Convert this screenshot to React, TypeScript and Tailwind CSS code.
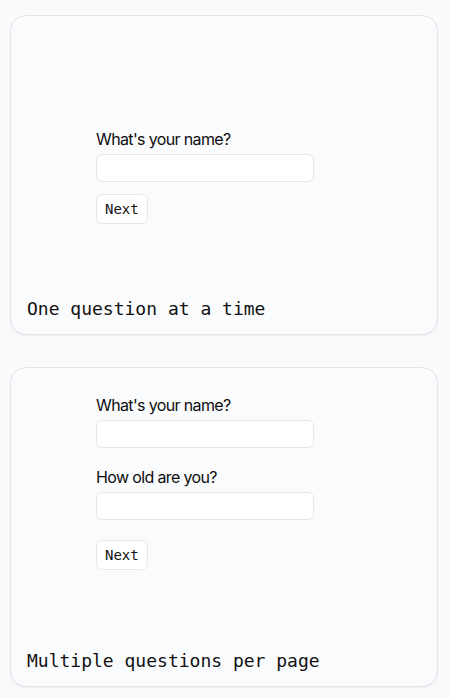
import React from "react";

const mono = { fontFamily: '"DejaVu Sans Mono", monospace' } as const;

function Field({ label, mt }: { label: string; mt: string }) {
  return (
    <div className={mt}>
      <div className="pt-[2px] text-[16px] leading-[20px] tracking-[-0.04em] text-[#0d0d0d]" style={{ fontFamily: "Inter, sans-serif" }}>
        {label}
      </div>
      <div className="mt-[5px] h-[28px] w-[218px] rounded-[6px] border border-[#e6e7eb] bg-white" />
    </div>
  );
}

function NextButton({ mt }: { mt: string }) {
  return (
    <div className={mt}>
      <button
        className="h-[30px] rounded-[6px] border border-[#e6e7eb] bg-white px-[8px] text-[14px] leading-[20px] text-[#111111]"
        style={mono}
      >
        Next
      </button>
    </div>
  );
}

function Card({ children, caption, pt }: { children: React.ReactNode; caption: string; pt: string }) {
  return (
    <div className="flex h-[320px] w-[428px] flex-col rounded-[16px] border border-[#e4e5e9] bg-[#fafbfd] shadow-[0_1px_2px_rgba(0,0,0,0.06)]">
      <div className={`pl-[85px] ${pt}`}>{children}</div>
      <div className="mt-auto pb-[16px] pl-[16px] text-[18px] leading-[18px] text-[#111111]" style={mono}>
        {caption}
      </div>
    </div>
  );
}

export default function App() {
  return (
    <div className="min-h-[698px] bg-[#f9fafc] pl-[10px] pt-[15px]">
      <Card caption="One question at a time" pt="pt-[111px]">
        <Field label="What's your name?" mt="" />
        <NextButton mt="mt-[12px]" />
      </Card>
      <div className="mt-[32px]">
        <Card caption="Multiple questions per page" pt="pt-[25px]">
          <Field label="What's your name?" mt="" />
          <Field label="How old are you?" mt="mt-[17px]" />
          <NextButton mt="mt-[20px]" />
        </Card>
      </div>
    </div>
  );
}
